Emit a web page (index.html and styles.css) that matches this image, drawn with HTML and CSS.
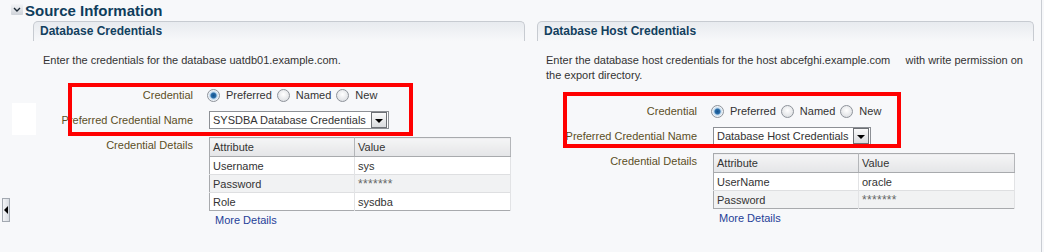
FILE: index.html
```html
<!DOCTYPE html>
<html lang="en">
<head>
    <meta charset="UTF-8">
    <title>Source Information</title>
    <link rel="stylesheet" href="styles.css">
</head>
<body>
    <div class="page">
        <div class="section-head">
            <svg class="disclose" width="12" height="11" viewBox="0 0 12 11">
                <defs>
                    <linearGradient id="dg" x1="0" y1="0" x2="0" y2="1">
                        <stop offset="0" stop-color="#f4f5f7"/>
                        <stop offset="1" stop-color="#cfd3d9"/>
                    </linearGradient>
                </defs>
                <rect x="0" y="0" width="12" height="11" rx="1" fill="url(#dg)"/>
                <path d="M3 4 L6 7 L9 4" fill="none" stroke="#1d2a36" stroke-width="1.4"/>
            </svg>
            <h1>Source Information</h1>
        </div>

        <div class="content">
            <div class="gutter">
                <div class="blank"></div>
                <div class="splitter"><span class="arrow-left"></span></div>
            </div>

            <!-- database credentials -->
            <div class="panel panel-left">
                <div class="panel-head">Database Credentials</div>
                <p class="desc">Enter the credentials for the database uatdb01.example.com.</p>
                <div class="form">
                    <div class="mark mark-left"></div>
                    <div class="label">Credential</div>
                    <div class="radios">
                        <span class="radio checked"></span><span class="opt">Preferred</span>
                        <span class="radio"></span><span class="opt">Named</span>
                        <span class="radio"></span><span class="opt">New</span>
                    </div>
                    <div class="label">Preferred Credential Name</div>
                    <div><span class="select"><span class="select-text">SYSDBA Database Credentials</span><span class="select-btn"></span></span></div>
                    <div class="label label-top">Credential Details</div>
                    <div>
                        <table class="attrs">
                            <tr><th>Attribute</th><th>Value</th></tr>
                            <tr><td>Username</td><td>sys</td></tr>
                            <tr class="alt"><td>Password</td><td class="secret">*******</td></tr>
                            <tr><td>Role</td><td>sysdba</td></tr>
                        </table>
                        <a class="more" href="#">More Details</a>
                    </div>
                </div>
            </div>

            <!-- database host credentials -->
            <div class="panel panel-right">
                <div class="panel-head">Database Host Credentials</div>
                <p class="desc">Enter the database host credentials for the host abcefghi.example.com&nbsp;&nbsp;&nbsp;&nbsp; with write permission on the export directory.</p>
                <div class="form">
                    <div class="mark mark-right"></div>
                    <div class="label">Credential</div>
                    <div class="radios">
                        <span class="radio checked"></span><span class="opt">Preferred</span>
                        <span class="radio"></span><span class="opt">Named</span>
                        <span class="radio"></span><span class="opt">New</span>
                    </div>
                    <div class="label">Preferred Credential Name</div>
                    <div><span class="select"><span class="select-text">Database Host Credentials</span><span class="select-btn"></span></span></div>
                    <div class="label label-top">Credential Details</div>
                    <div>
                        <table class="attrs">
                            <tr><th>Attribute</th><th>Value</th></tr>
                            <tr><td>UserName</td><td>oracle</td></tr>
                            <tr class="alt"><td>Password</td><td class="secret">*******</td></tr>
                        </table>
                        <a class="more" href="#">More Details</a>
                    </div>
                </div>
            </div>
        </div>
    </div>
</body>
</html>
```

FILE: styles.css
```css
body {
    margin: 0;
    background-color: #f7f8fa;
    font-family: "Liberation Sans", Arial, sans-serif;
    font-size: 11px;
    color: #333;
}

.page {
    width: 1042px;
    height: 252px;
    border-right: 1px solid #c9cdd3;
    box-sizing: border-box;
}

.section-head {
    display: flex;
    align-items: center;
    height: 21px;
    padding-left: 11px;
}

.disclose {
    margin-right: 2px;
    margin-top: -2px;
}

h1 {
    margin: 0;
    font-size: 15px;
    line-height: 18px;
    color: #0f3d5c;
}

.content {
    display: flex;
}

.gutter {
    width: 33px;
    display: flex;
    flex-direction: column;
}

.blank {
    margin: 82px 0 0 12px;
    width: 24px;
    height: 32px;
    background-color: #fff;
}

.splitter {
    margin: 63px 0 0 2px;
    width: 6px;
    height: 22px;
    border: 1px solid #a3a9b1;
    background: linear-gradient(to right, #f3f4f6, #d8dce2);
    display: flex;
    align-items: center;
    justify-content: center;
}

.arrow-left {
    width: 0;
    height: 0;
    border-top: 4px solid transparent;
    border-bottom: 4px solid transparent;
    border-right: 4px solid #000;
}

.panel-left {
    width: 492px;
}

.panel-right {
    width: 497px;
    margin-left: 12px;
}

.panel-head {
    height: 19px;
    line-height: 19px;
    padding-left: 6px;
    border: 1px solid #c7cbd1;
    border-bottom: none;
    border-radius: 5px 5px 0 0;
    background: linear-gradient(#e8ebef, #f7f8fa);
    font-size: 12px;
    font-weight: bold;
    color: #12405e;
}

.desc {
    margin: 12px 0 0 10px;
    line-height: 15px;
    width: 482px;
}

.panel-right .desc {
    margin-left: 9px;
}

.form {
    position: relative;
    margin-top: 19px;
    display: grid;
    grid-template-columns: 160px auto;
    column-gap: 16px;
    row-gap: 8px;
    align-items: center;
}

.panel-right .form {
    margin-top: 20px;
}

.label {
    text-align: right;
    color: #5c4f1f;
    white-space: nowrap;
}

.label-top {
    align-self: start;
    padding-top: 2px;
}

/* red highlight drawn over the form */
.mark {
    position: absolute;
    border: 4px solid #ff0000;
    box-sizing: border-box;
    pointer-events: none;
}

.mark-left {
    left: 35px;
    top: -4px;
    width: 345px;
    height: 53px;
}

.mark-right {
    left: 26px;
    top: -11px;
    width: 338px;
    height: 56px;
}

.radios {
    display: flex;
    align-items: center;
    height: 16px;
    margin-left: -2px;
}

.radio {
    width: 11px;
    height: 11px;
    border: 1px solid #8e939a;
    border-radius: 50%;
    background: radial-gradient(circle at 50% 40%, #ffffff, #d5d8dc);
    margin-right: 6px;
}

.radio.checked {
    background: radial-gradient(circle, #14528c 0, #2a6eaa 2.5px, #bcd6ec 3.5px, #eef3f8 5px);
}

.opt {
    margin-right: 5px;
}

.select {
    display: inline-flex;
    align-items: center;
    height: 18px;
    box-sizing: border-box;
    border: 1px solid #8d9095;
    background-color: #fff;
    padding: 0 1px 0 3px;
}

.select-text {
    margin-right: 5px;
}

.select-btn {
    width: 14px;
    height: 14px;
    border: 1px solid #6d7075;
    background: linear-gradient(#fafafa, #d9dbde);
    display: flex;
    align-items: center;
    justify-content: center;
}

.select-btn::after {
    content: "";
    border-left: 4px solid transparent;
    border-right: 4px solid transparent;
    border-top: 4px solid #000;
    margin-top: 2px;
}

.attrs {
    border-collapse: collapse;
    width: 302px;
    border: 1px solid #a8aaad;
    background-color: #fff;
}

.attrs th {
    height: 18px;
    padding: 0 3px;
    text-align: left;
    font-weight: normal;
    background: linear-gradient(#f5f5f6, #e4e5e7);
    border-right: 1px solid #b4b6b9;
    border-bottom: 1px solid #a8aaad;
}

.attrs th:first-child,
.attrs td:first-child {
    width: 138px;
}

.attrs td {
    height: 17px;
    padding: 0 3px;
    border-top: 1px solid #dedfe1;
    border-right: 1px solid #e2e3e5;
}

.attrs tr.alt td {
    background-color: #f1f2f3;
}

.secret {
    color: #666;
    font-size: 12px;
    letter-spacing: 0.3px;
}

.more {
    display: inline-block;
    margin: 3px 0 0 6px;
    color: #1f3f98;
    text-decoration: none;
}
```
